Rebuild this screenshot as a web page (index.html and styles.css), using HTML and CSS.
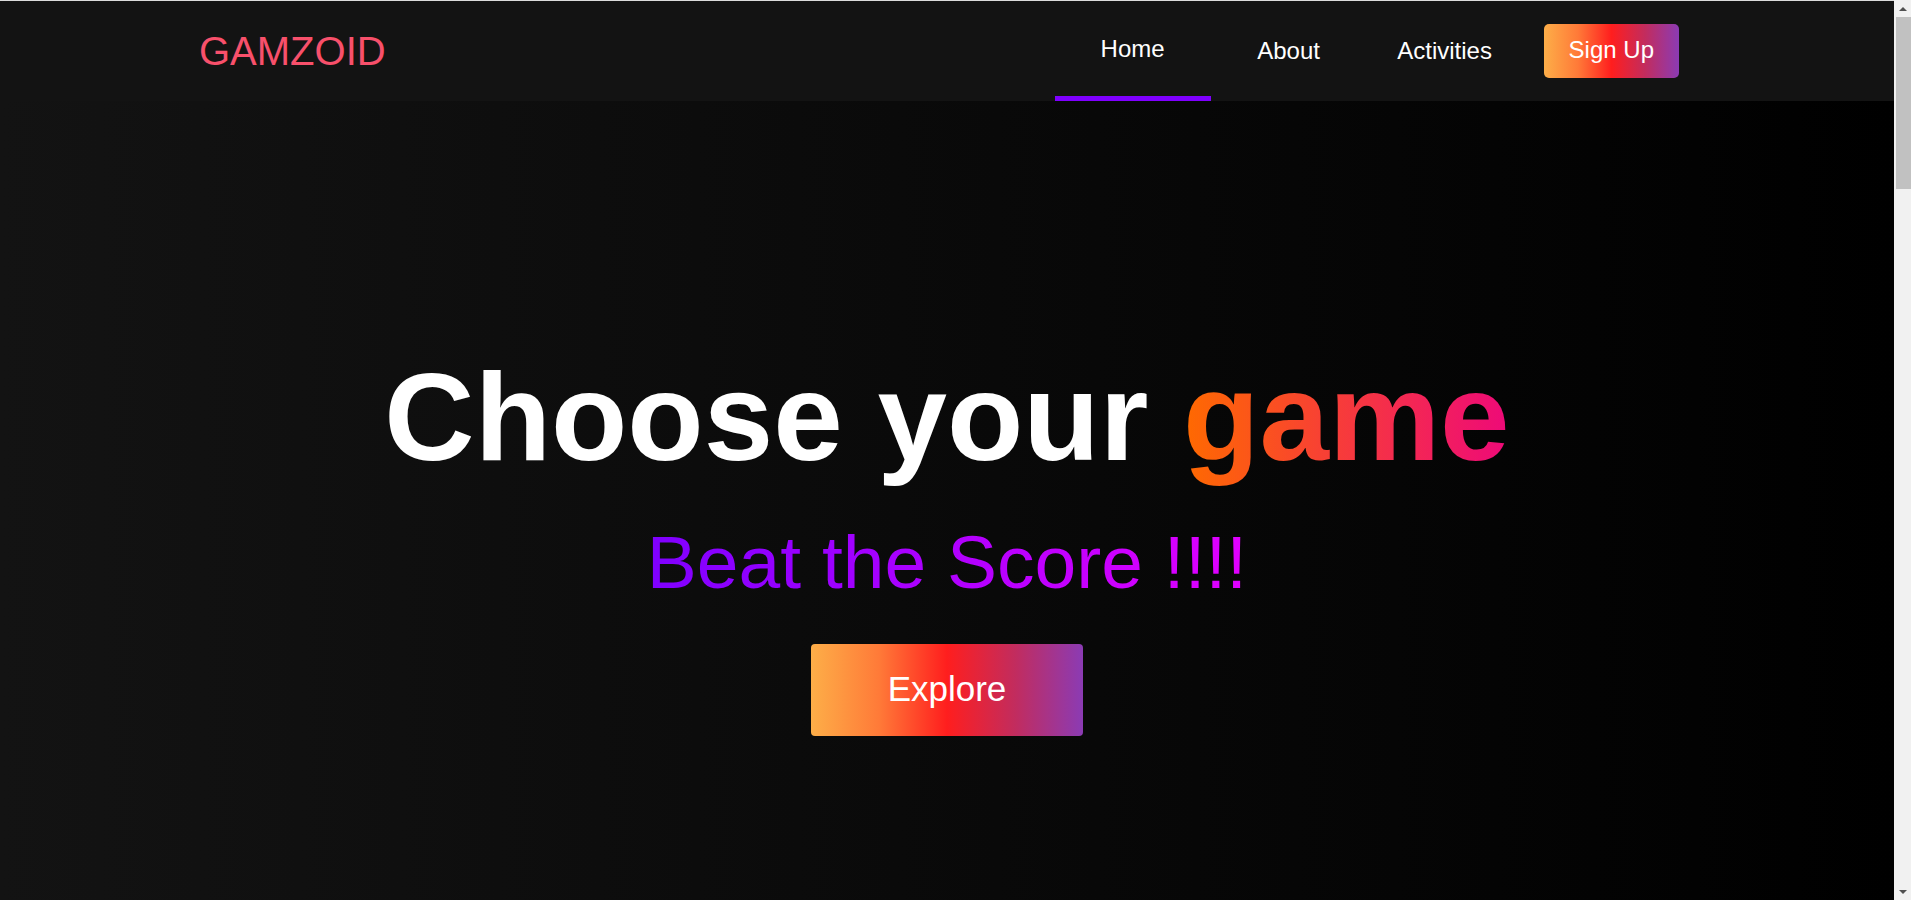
FILE: index.html
```html
<!DOCTYPE html>
<html lang="en">
<head>
<meta charset="utf-8">
<title>Gamzoid</title>
<link rel="stylesheet" href="styles.css">
</head>
<body>
  <div class="page">
    <header class="navbar">
      <a class="logo" href="#">GAMZOID</a>
      <nav class="nav">
        <a class="nav-link active" href="#">Home</a>
        <a class="nav-link" href="#">About</a>
        <a class="nav-link" href="#">Activities</a>
        <a class="btn btn-signup" href="#">Sign Up</a>
      </nav>
    </header>
    <main class="hero">
      <h1 class="hero-title">Choose your <span class="accent">game</span></h1>
      <p class="hero-sub"><span class="sub-text">Beat the Score !!!!</span></p>
      <a class="btn btn-explore" href="#">Explore</a>
    </main>
  </div>
  <div class="scrollbar" aria-hidden="true">
    <span class="sb-arrow sb-up"></span>
    <span class="sb-track"><span class="sb-thumb"></span></span>
    <span class="sb-arrow sb-down"></span>
  </div>
</body>
</html>
```

FILE: styles.css
```css
* {
  box-sizing: border-box;
}

html {
  background: #000;
}

body {
  margin: 0;
  display: flex;
  align-items: flex-start;
  font-family: "Liberation Sans", Arial, sans-serif;
  color: #fff;
  background: #000;
}

a {
  text-decoration: none;
  color: inherit;
}

.page {
  flex: 1;
  min-width: 0;
  display: flex;
  flex-direction: column;
  min-height: 100vh;
  border-top: 1px solid #dcdcdc;
}

.navbar {
  height: 100px;
  display: flex;
  align-items: stretch;
  justify-content: space-between;
  padding: 0 215px 0 199px;
  background: #131313;
}

.logo {
  align-self: center;
  font-size: 40px;
  color: #f8506b;
}

.nav {
  display: flex;
  align-items: stretch;
}

.nav-link {
  width: 156px;
  display: flex;
  align-items: center;
  justify-content: center;
  font-size: 24px;
  color: #fff;
}

.nav-link.active {
  border-bottom: 5px solid #7f00ff;
}

.btn {
  display: inline-block;
  color: #fff;
  background: linear-gradient(to right, #fdae48 0%, #ff7a38 25%, #ff1e1e 50%, #c22c5e 75%, #8b3bb4 100%);
}

.btn-signup {
  align-self: center;
  margin-left: 21px;
  padding: 12px 25px 14px;
  font-size: 24px;
  border-radius: 5px;
}

.hero {
  flex: 1;
  display: flex;
  flex-direction: column;
  align-items: center;
  padding-top: 244px;
  background: linear-gradient(to right, #131313, #000);
}

.hero-title {
  margin: 0;
  font-size: 125px;
  line-height: 144px;
  font-weight: bold;
  color: #fff;
}

.accent {
  background: linear-gradient(to right, #ff6a00, #ee0979);
  -webkit-background-clip: text;
  background-clip: text;
  color: transparent;
}

.hero-sub {
  margin: 30px 0 0;
  font-size: 75px;
  line-height: 86px;
}

.sub-text {
  background: linear-gradient(to right, #7f00ff, #e100ff);
  -webkit-background-clip: text;
  background-clip: text;
  color: transparent;
}

.btn-explore {
  margin-top: 39px;
  padding: 25px 77px 27px;
  font-size: 35px;
  line-height: 40px;
  border-radius: 4px;
}

/* window scrollbar */
.scrollbar {
  position: sticky;
  top: 0;
  flex: 0 0 17px;
  width: 17px;
  height: 100vh;
  display: flex;
  flex-direction: column;
  background: #f1f1f1;
}

.sb-arrow {
  flex: 0 0 17px;
  display: flex;
  align-items: center;
  justify-content: center;
}

.sb-up::before,
.sb-down::before {
  content: "";
  width: 0;
  height: 0;
  border-left: 4px solid transparent;
  border-right: 4px solid transparent;
}

.sb-up::before {
  border-bottom: 4px solid #505050;
}

.sb-down::before {
  border-top: 4px solid #505050;
}

.sb-track {
  flex: 1;
  display: flex;
  flex-direction: column;
  padding-left: 2px;
}

.sb-thumb {
  height: 172px;
  background: #c1c1c1;
}
```
